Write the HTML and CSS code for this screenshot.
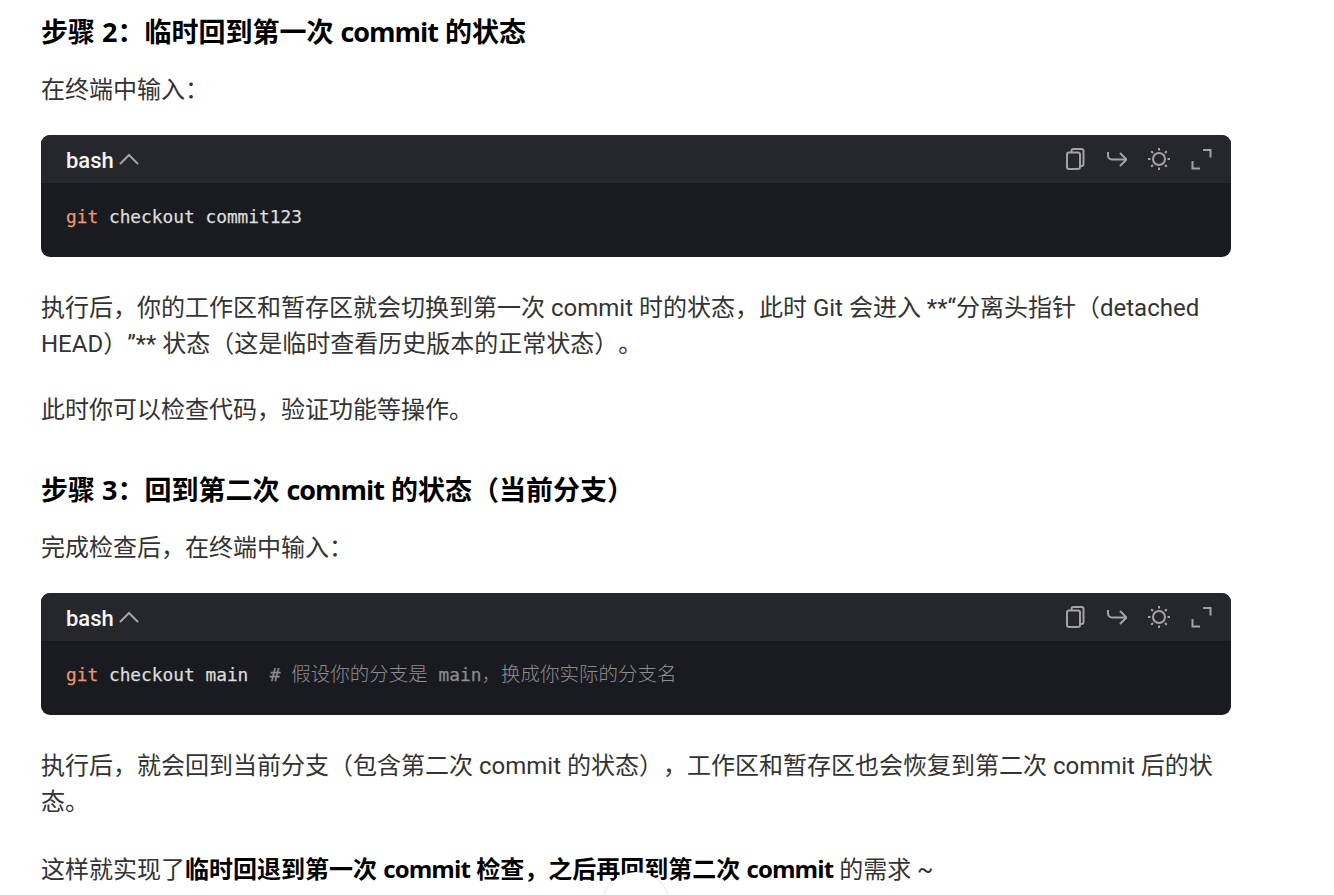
FILE: index.html
```html
<!DOCTYPE html>
<html lang="zh-CN">
<head>
<meta charset="utf-8">
<title>步骤</title>
<link rel="stylesheet" href="styles.css">
</head>
<body>
<main class="content">
  <h3 class="step step-first">步骤 2：临时回到第一次 <span class="latin">commit</span> 的状态</h3>
  <p class="text lead">在终端中输入：</p>
  <section class="code">
    <header class="code-head">
      <span class="lang">bash</span>
      <svg class="chev" width="20" height="12" viewBox="0 0 20 12"><path d="M1 11L10 2L19 11"/></svg>
      <div class="tools">
        <svg class="tool" width="22" height="24" viewBox="0 0 22 24"><path d="M6.500 5.500V4a2 2 0 0 1 2-2H16.500a2 2 0 0 1 2 2V17a2 2 0 0 1-2 2H15.500"/><rect x="2" y="5.500" width="13" height="16.500" rx="2"/></svg>
        <svg class="tool" width="20" height="24" viewBox="0 0 20 24"><path d="M1 5v3.500a4 4 0 0 0 4 4h14M13 6l6.500 6.500L13 19"/></svg>
        <svg class="tool" width="24" height="24" viewBox="0 0 24 24"><circle cx="12" cy="12" r="6"/><path d="M12 1v2.500M12 20.500V23M1 12h2.500M20.500 12H23M4.200 4.200l1.800 1.800M18 18l1.800 1.800M4.200 19.800L6 18M18 6l1.800-1.800"/></svg>
        <svg class="tool" width="21" height="22" viewBox="0 0 21 22"><path d="M12 2h7.500v7.500M1.500 13v7.500H9"/></svg>
      </div>
    </header>
    <pre class="code-body"><span class="kw">git</span> checkout commit123</pre>
  </section>
  <p class="text after-code">执行后，你的工作区和暂存区就会切换到第一次 commit 时的状态，此时 Git 会进入 **“分离头指针（detached HEAD）”** 状态（这是临时查看历史版本的正常状态）。</p>
  <p class="text next">此时你可以检查代码，验证功能等操作。</p>
  <h3 class="step step-next">步骤 3：回到第二次 <span class="latin">commit</span> 的状态（当前分支）</h3>
  <p class="text lead">完成检查后，在终端中输入：</p>
  <section class="code">
    <header class="code-head">
      <span class="lang">bash</span>
      <svg class="chev" width="20" height="12" viewBox="0 0 20 12"><path d="M1 11L10 2L19 11"/></svg>
      <div class="tools">
        <svg class="tool" width="22" height="24" viewBox="0 0 22 24"><path d="M6.500 5.500V4a2 2 0 0 1 2-2H16.500a2 2 0 0 1 2 2V17a2 2 0 0 1-2 2H15.500"/><rect x="2" y="5.500" width="13" height="16.500" rx="2"/></svg>
        <svg class="tool" width="20" height="24" viewBox="0 0 20 24"><path d="M1 5v3.500a4 4 0 0 0 4 4h14M13 6l6.500 6.500L13 19"/></svg>
        <svg class="tool" width="24" height="24" viewBox="0 0 24 24"><circle cx="12" cy="12" r="6"/><path d="M12 1v2.500M12 20.500V23M1 12h2.500M20.500 12H23M4.200 4.200l1.800 1.800M18 18l1.800 1.800M4.200 19.800L6 18M18 6l1.800-1.800"/></svg>
        <svg class="tool" width="21" height="22" viewBox="0 0 21 22"><path d="M12 2h7.500v7.500M1.500 13v7.500H9"/></svg>
      </div>
    </header>
    <pre class="code-body"><span class="kw">git</span> checkout main  <span class="cm"># <span class="cjk">假设你的分支是</span> main<span class="cjk">，换成你实际的分支名</span></span></pre>
  </section>
  <p class="text after-code">执行后，就会回到当前分支（包含第二次 commit 的状态），工作区和暂存区也会恢复到第二次 commit 后的状态。</p>
  <p class="text next last">这样就实现了<strong>临时回退到第一次 <span class="latin">commit</span> 检查，之后再回到第二次 <span class="latin">commit</span></strong> 的需求 ~</p>
</main>
<div class="fab"></div>
</body>
</html>
```
FILE: styles.css
```css
html, body {
  margin: 0;
  height: 895px;
  overflow: hidden;
  background: #fff;
}
body {
  font-family: Roboto, "Noto Sans CJK SC", sans-serif;
  color: #333;
  text-spacing-trim: space-all;
}
.content {
  width: 1190px;
  margin-left: 41px;
  padding-top: 14px;
}
.step {
  margin: 0;
  font-family: "Open Sans", "Noto Sans CJK SC", sans-serif;
  font-size: 27px;
  line-height: 36px;
  font-weight: 700;
  color: #000;
}
.step-next { margin-top: 44px; }
.latin { letter-spacing: -0.037em; }
.text {
  margin: 0;
  font-size: 24px;
  line-height: 36px;
  color: #333;
}
.text strong {
  font-family: "Open Sans", "Noto Sans CJK SC", sans-serif;
  color: #000;
  font-weight: 700;
}
.lead { margin-top: 22px; margin-bottom: 27px; }
.after-code { margin-top: 33px; }
.next { margin-top: 30px; }
.last { margin-top: 31px; }
.code {
  background: #1a1b20;
  border-radius: 9px;
  overflow: hidden;
}
.code-head {
  height: 48px;
  background: #26272c;
  display: flex;
  align-items: center;
  padding: 0 19px 0 25px;
}
.lang {
  font-size: 22px;
  font-weight: 500;
  color: #f6f6f6;
  padding-top: 2px;
}
.chev { margin-left: 5px; }
.chev path, .tool path, .tool rect, .tool circle {
  fill: none;
  stroke: #a3a3a5;
  stroke-width: 2;
}
.tools {
  margin-left: auto;
  display: flex;
  align-items: center;
  gap: 20px;
}
.code-body {
  margin: 0;
  height: 74px;
  box-sizing: border-box;
  padding: 20px 25px 0;
  font-family: "DejaVu Sans Mono", "Noto Sans CJK SC", monospace;
  font-size: 17.820px;
  line-height: 27px;
  color: #dcdcdc;
  -webkit-text-stroke: 0.25px currentColor;
}
.kw { color: #ed9470; }
.cm { color: #8c8c91; }
.cjk {
  font-size: 19.500px;
  line-height: 0;
  font-family: "Noto Sans CJK SC", sans-serif;
  font-weight: 300;
  -webkit-text-stroke: 0;
}
.fab {
  position: absolute;
  left: 603px;
  top: 872px;
  width: 66px;
  height: 66px;
  border-radius: 50%;
  background: #fff;
  box-shadow: 0 0 2px rgba(0,0,0,.25);
}
```
